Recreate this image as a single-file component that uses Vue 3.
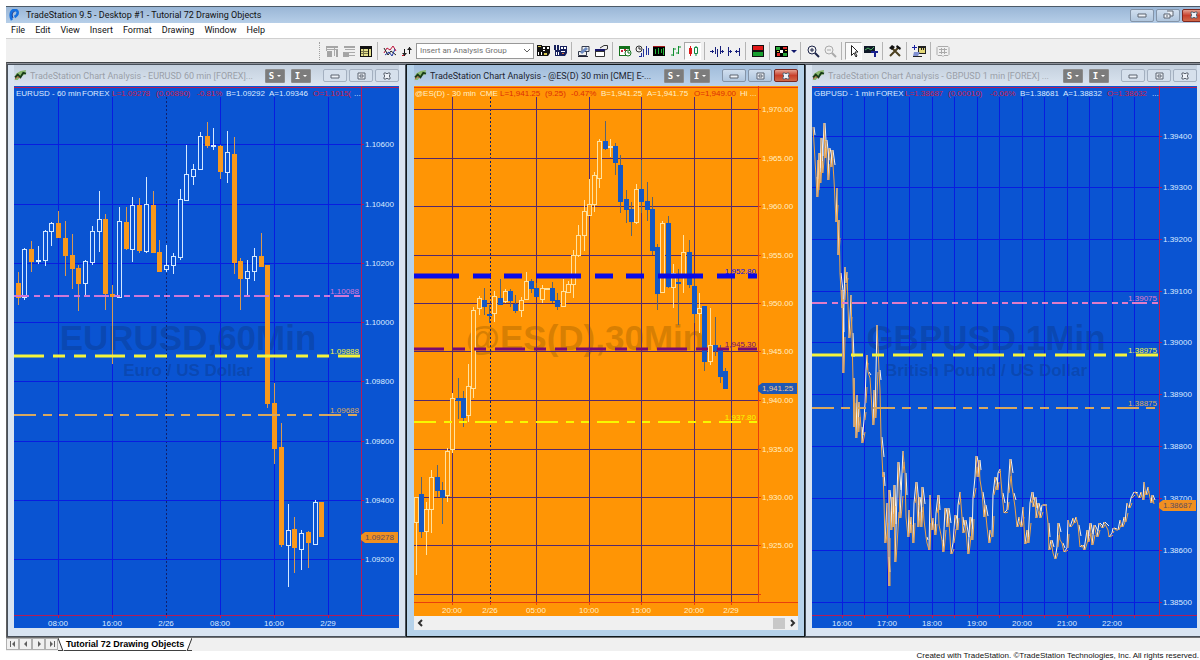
<template>
  <div class="app">
    <!-- Title bar -->
    <header class="app-title">
      <svg class="app-logo" viewBox="0 0 12 12">
        <path d="M4 11C2 8 2 1 6.500 1S10.500 6 6.500 8" fill="none" stroke="#1470e0" stroke-width="2.600" />
        <path d="M5 9C3.500 6 4.500 2.500 6.500 2.500" fill="none" stroke="#0a2f8c" stroke-width="1" />
      </svg>
      <h1>TradeStation 9.5 - Desktop #1 - Tutorial 72 Drawing Objects</h1>
      <div class="app-controls">
        <button v-for="c in appControls" :key="c.name" class="ctl" :class="c.cls" :aria-label="c.name">
          <svg viewBox="0 0 12 10"><path :d="c.d" /></svg>
        </button>
      </div>
    </header>

    <!-- Menu -->
    <nav class="menu">
      <a v-for="m in menu" :key="m" href="#">{{ m }}</a>
    </nav>

    <!-- Toolbar -->
    <div class="toolbar" role="toolbar">
      <span class="grip" />
      <template v-for="(t, i) in tools" :key="i">
        <span v-if="t === '|'" class="sep" />
        <div v-else-if="t === 'group'" class="group">
          <select aria-label="Analysis group">
            <option>Insert an Analysis Group</option>
          </select>
          <svg viewBox="0 0 8 8"><path d="M1 2l3 3 3-3" /></svg>
        </div>
        <button v-else class="tool" :class="{ pressed: t.on, slim: t.slim }" :aria-label="t.name">
          <svg :viewBox="t.slim ? '0 0 7 16' : '0 0 16 16'">
            <path v-for="(p, j) in t.p" :key="j" :d="p[1]" :fill="p[2] ? 'none' : p[0]" :stroke="p[2] ? p[0] : 'none'" :stroke-width="p[2]" />
          </svg>
        </button>
      </template>
    </div>

    <!-- Chart windows -->
    <main class="desk">
      <section v-for="c in charts" :key="c.id" class="win" :class="[c.id, { active: c.active }]">
        <div class="win-title">
          <svg class="win-icon" viewBox="0 0 14 12">
            <path d="M1 11l1-7 5-3 6-1-1 5-5 2-3 4z" fill="#8ab870" />
            <path d="M1 8l3-3 3 3 3-5 3 1" fill="none" stroke="#173c18" stroke-width="2" />
            <path d="M1 10l3-3 2 2" fill="none" stroke="#b0402c" stroke-width="1" />
          </svg>
          <h2>{{ c.title }}</h2>
          <button class="drop">S<i /></button>
          <button class="drop">I<i /></button>
          <div class="win-controls">
            <button v-for="w in winControls" :key="w.name" class="ctl" :class="w.cls" :aria-label="w.name">
              <svg viewBox="0 0 12 10"><path :d="w.d" /></svg>
            </button>
          </div>
        </div>

        <svg class="chart" :viewBox="c.box.join(' ')">
          <rect :x="c.box[0]" :y="c.box[1]" :width="c.box[2]" :height="c.box[3]" class="bg" />
          <g class="mark">
            <text :x="c.mark.x" y="350" class="mark-big">{{ c.mark.big }}</text>
            <text :x="c.mark.x" y="376" class="mark-small">{{ c.mark.small }}</text>
          </g>

          <!-- grid -->
          <path v-for="g in c.xs" :key="'x' + g[0]" :d="`M${g[0]} 97V${c.axisY}`" class="grid" :class="{ day: g[2] }" />
          <path v-for="g in c.ys" :key="'y' + g[0]" :d="`M${c.box[0]} ${g[0]}H${c.axisX}`" class="grid" />

          <!-- candles -->
          <g v-for="(k, i) in c.candles" :key="'c' + i" class="candle" :class="k[0] ? 'up' : 'down'">
            <path :d="wick(c, k, i)" />
            <rect :x="barX(c, i) - 2" :y="k[2]" width="4" :height="k[3] - k[2]" />
          </g>
          <g v-if="c.ticks" class="ticks">
            <path :d="c.ticks.rise" class="rise" />
            <path :d="c.ticks.fall" class="fall" />
          </g>

          <!-- horizontal drawing objects -->
          <g v-for="l in c.lines" :key="l.label">
            <path :d="`M${c.box[0]} ${l.y}H${c.axisX - 1}`" :stroke="l.color" :stroke-width="l.w" :stroke-dasharray="l.dash" />
            <text :x="c.axisX - 2" :y="l.y - 2" :fill="l.color" text-anchor="end">{{ l.label }}</text>
          </g>

          <!-- axes -->
          <path :d="`M${c.axisX} ${c.box[1]}V${c.axisY}M${c.box[0]} ${c.axisY}H${c.box[0] + c.box[2]}`" class="axis" />
          <path :d="`M${c.box[0]} 87H${c.box[0] + c.box[2]}`" class="axis" />
          <template v-for="g in c.ys" :key="'t' + g[0]">
            <path :d="`M${c.axisX} ${g[0]}h3`" class="axis" />
            <text :x="c.axisX + 4" :y="g[0] + 3" class="label">{{ g[1] }}</text>
          </template>
          <template v-for="g in c.xs" :key="'h' + g[0]">
            <path :d="`M${g[0]} ${c.axisY}v3`" class="axis" />
            <text :x="g[0]" :y="c.axisY + 11" text-anchor="middle" class="label">{{ g[1] }}</text>
          </template>

          <path :d="`M${c.axisX + 4} ${c.last.y - 5}H${c.box[0] + c.box[2] - 1}v11H${c.axisX + 4}l-4-3v-5z`" class="last-bg" />
          <text :x="c.axisX + 4" :y="c.last.y + 3" class="last">{{ c.last.label }}</text>

          <text v-for="s in c.info" :key="s[0]" :x="s[0]" y="96" :class="s[2] ? 'neg' : 'label'">{{ s[1] }}</text>
        </svg>

        <div v-if="c.active" class="scroll">
          <button aria-label="Scroll left"><svg viewBox="0 0 8 8"><path d="M5 1L2 4l3 3" /></svg></button>
          <span class="thumb" />
          <button aria-label="Scroll right"><svg viewBox="0 0 8 8"><path d="M3 1l3 3-3 3" /></svg></button>
        </div>
      </section>
    </main>

    <!-- Workspace tabs -->
    <div class="tabs">
      <button v-for="n in tabNav" :key="n.name" class="tab-nav" :aria-label="n.name">
        <svg viewBox="0 0 8 8"><path :d="n.d" /></svg>
      </button>
      <button class="tab">
        <svg class="slant" viewBox="0 0 6 13"><path d="M0 0H6V13H5z" class="fill" /><path d="M0 0L5 13" /></svg>
        <span>Tutorial 72 Drawing Objects</span>
        <svg class="slant" viewBox="0 0 6 13"><path d="M0 0H6L1 13H0z" class="fill" /><path d="M6 0L1 13" /></svg>
      </button>
    </div>

    <footer class="credit">Created with TradeStation. ©TradeStation Technologies, Inc. All rights reserved.</footer>
  </div>
</template>

<script setup>
const menu = ['File', 'Edit', 'View', 'Insert', 'Format', 'Drawing', 'Window', 'Help']

const MIN = 'M2 4h8v3H2z'
const MAX = 'M3 2h7v6H3zM5 4h3v2H5z'
const RESTORE = 'M5 1h6v5H8M2 4h6v4H2zM4 6h2'
const CLOSE = 'M3 2h2l1 1 1-1h2v2L8 5l1 1v2H7L6 7 5 8H3V6l1-1-1-1z'

const appControls = [
  { name: 'Minimize', d: MIN },
  { name: 'Restore', d: RESTORE },
  { name: 'Close', d: CLOSE, cls: 'close red' },
]
const winControls = [
  { name: 'Minimize', d: MIN },
  { name: 'Maximize', d: MAX },
  { name: 'Close', d: CLOSE, cls: 'close' },
]

const tabNav = [
  { name: 'First', d: 'M1 1h1v6H1zM6 1v6L3 4z' },
  { name: 'Previous', d: 'M5 1v6L2 4z' },
  { name: 'Next', d: 'M3 1v6l3-3z' },
  { name: 'Last', d: 'M2 1v6l3-3zM6 1h1v6H6z' },
]

// icon layers: [colour, path, stroke width]; no width means filled
const tools = [
  { name: 'Chart', p: [['#a5a5a5', 'M2 3h12v2H2zM3 8h5v6H3zM12 7h2v7h-2z'], ['#aaa', 'M2.500 5v3M10.500 5v8M3 6.500h11', 1]] },
  { name: 'Quotes', p: [['#a5a5a5', 'M3 3h11v2H3zM2 9h6v5H2z'], ['#aaa', 'M4 6.500h10M4 9.500h10M8 12.500h6', 1]] },
  { name: 'Matrix', p: [['#111', 'M2 3h12v11H2z'], ['#e4e08c', 'M3 6h7v7H3zM11 6h2v7h-2z'], ['#77754a', 'M3 8.500h7M3 10.500h7M5.500 6v7', 1]] },
  '|',
  { name: 'Indicator', p: [['#c0143c', 'M2 10l3-5 3 2 3-4 3 5', 1], ['#222', 'M2 5l4 7 3-4 5 4', 1], ['#2038a0', 'M3 12l4-3 3 4 3-7', 1]] },
  { name: 'Sort', p: [['#111', 'M5.500 6v7M10.500 4v7', 1], ['#222', 'M3 10h5l-2.500 3zM8 7h5l-2.500-3z'], ['#c01020', 'M3 12h2v1H3z']] },
  'group',
  { name: 'Apply group', p: [['#111', 'M2 2h5v5H2zM7 3h8v7l-2 3H7zM2 7h6v6H2z'], ['#fff', 'M8 4h2v2H8zM12 4h2v2h-2zM8 7h2v1H8zM3 9h1v3H3zM6 9h1v3H6z'], ['#d8c850', 'M9 10h3v2H9zM3 3h3v1H3z']] },
  { name: 'Save group', p: [['#16205c', 'M2 2h2v5H2zM5 2h2v5H5zM8 3h7v7l-2 3H8zM3 7h5v6H3z'], ['#fff', 'M9 4h2v2H9zM12 4h2v2h-2zM4 9h1v3H4zM6 9h1v3H6zM9 8h4v1H9z'], ['#d86a30', 'M10 10h2v1h-2z']] },
  '|',
  { name: 'Format analysis', p: [['#333a4c', 'M6 3.500h7v5H6zM2.500 8.500h8v4h-8z', 1], ['#6c8ac0', 'M4 9l6-5 2 2-6 5z'], ['#223', 'M2 13h10v1H2z']] },
  { name: 'Format window', p: [['#fff', 'M2 7h10v7H2z'], ['#16166c', 'M2 6h10v3H2z'], ['#333', 'M2.500 8.500h9v5h-9zM7 5l4-2.500h3.500V6l-3 1', 1]] },
  '|',
  { name: 'Session', p: [['#14701c', 'M2 3h11v10H2z'], ['#fff', 'M3 6h9v6H3z'], ['#c8203a', 'M4 7h2v2H4zM7 6h2v2H7z'], ['#fff', 'M14 10a3 3 0 1 1-6 0 3 3 0 0 1 6 0z'], ['#14701c', 'M14 10a3 3 0 1 1-6 0 3 3 0 0 1 6 0zM11 8v2h2', 1]] },
  { name: 'Interval', p: [['#333', 'M8 6a3 3 0 1 1-6 0 3 3 0 0 1 6 0zM5 4v2h2', 1], ['#20309c', 'M9.500 6v8M12.500 3v9M7.500 10v4M14.500 5v7M5 13.500h2', 1]] },
  { name: 'Data', p: [['#000', 'M2 3h12v10H2z'], ['#24b838', 'M4.500 6v5M7.500 5v6M10.500 6v4M12.500 5v7', 1], ['#a01818', 'M2 3h12v1H2z']] },
  { name: 'Bars', p: [['#109030', 'M5.500 5v8M3 12h2M6 6h2M10.500 3v8M8 10h2M11 4h2', 1]] },
  { name: 'Candles', on: true, p: [['#e01818', 'M4 5h3v6H4zM5 3h1v10H5z'], ['#108840', 'M9.500 4.500h3v6h-3zM11 3v1M11 11v2', 1]] },
  '|',
  { name: 'Narrow spacing', p: [['#18207c', 'M1 8.500h4M11 8.500h4M6.500 4v7M8.500 6v8M11.500 3v8M3.500 7v3M13.500 7v3', 1]] },
  { name: 'Wide spacing', p: [['#18207c', 'M2.500 4v9M2 8.500h4M9 8.500h5M13.500 5v8M4.500 7v3M10.500 7v3', 1]] },
  '|',
  { name: 'Subgraphs', p: [['#111', 'M2 2h12v12H2z'], ['#e01818', 'M3 3h10v4H3z'], ['#18a030', 'M3 9h10v4H3z']] },
  '|',
  { name: 'Drawing colors', p: [['#000', 'M1 3h13v11H1z'], ['#28a838', 'M2 4h4v3H2zM9 10h4v3H9z'], ['#e02828', 'M9 4h4v2H9zM3 10h3v3H3z'], ['#fff', 'M6 7h3v3H6z'], ['#e0d040', 'M3 8h2v1H3zM11 7h2v1h-2z']] },
  { name: 'More colors', slim: true, p: [['#10186c', 'M1 7h6l-3 3z']] },
  '|',
  { name: 'Zoom in', p: [['#1c2448', 'M11 7a4 4 0 1 1-8 0 4 4 0 0 1 8 0zM5 7h4M7 5v4', 1], ['#1c2448', 'M10 10l4 4', 2]] },
  { name: 'Zoom out', p: [['#aaa', 'M11 7a4 4 0 1 1-8 0 4 4 0 0 1 8 0zM5 7h4', 1], ['#aaa', 'M10 10l4 4', 2]] },
  '|',
  { name: 'Pointer', on: true, p: [['#fff', 'M5 2v11l3-3 2 4 1-1-2-4h3z'], ['#222', 'M5.500 2.500v10l2.500-2.500 2 4 1-1-2-4h3z', 1]] },
  { name: 'Data tip', p: [['#101828', 'M1 3h11v7H1z'], ['#48b060', 'M2 7l3-2 3 2 3-3', 1], ['#18208c', 'M8 8h7v2h-2v4h-2v-4H8z']] },
  '|',
  { name: 'Tools', p: [['#4c4020', 'M3 13L12 4M4 4l9 9', 2], ['#111', 'M2 5l3-3 3 2-3 3zM10 2l4 3-1 2-4-3z']] },
  '|',
  { name: 'New window', p: [['#222', 'M7 3h8v8H7z'], ['#e4d878', 'M8 5h6v5H8z'], ['#1820a0', 'M1 4h5v1H1zM3 2h1v5H3z'], ['#8090d0', 'M3 9h6l-2 4H2z'], ['#222', 'M2 13h9v1H2zM10 5h1v2h-1zM12 5h1v2h-1z']] },
  '|',
  { name: 'Print grid', p: [['#aaa', 'M3 3.500h10l1 1v7l-1 1H9l-1 1-1-1H3l-1-1v-7zM4 6.500h8M4 9.500h8M6.500 5v6M9.500 5v6', 1]] },
]

// candle rows: [rising, high, top, bottom, low]
const eurCandles = [
  [0, 272, 283, 297, 305], [1, 248, 249, 297, 300], [0, 241, 249, 261, 272], [1, 246, 260, 261, 264],
  [1, 230, 231, 260, 266], [1, 222, 223, 231, 246], [0, 211, 223, 237, 237], [0, 221, 238, 255, 276],
  [0, 234, 255, 268, 289], [0, 265, 268, 283, 311], [1, 260, 261, 283, 296], [1, 226, 231, 262, 265],
  [1, 191, 219, 231, 252], [0, 214, 219, 293, 310], [0, 285, 294, 296, 364], [1, 207, 221, 297, 297],
  [0, 207, 222, 248, 250], [1, 197, 205, 249, 262], [0, 198, 205, 250, 253], [1, 177, 204, 251, 253],
  [0, 191, 205, 252, 252], [0, 240, 252, 271, 271], [1, 245, 265, 269, 272], [1, 253, 256, 265, 274],
  [1, 189, 199, 257, 260], [1, 145, 174, 200, 200], [1, 164, 169, 176, 185], [1, 132, 136, 169, 170],
  [0, 122, 136, 145, 148], [1, 128, 145, 146, 150], [0, 145, 146, 171, 179], [1, 131, 152, 172, 183],
  [0, 137, 154, 262, 274], [0, 258, 261, 278, 310], [1, 260, 271, 278, 296], [1, 248, 256, 271, 281],
  [0, 233, 256, 266, 267], [0, 265, 265, 403, 408], [0, 383, 403, 448, 464], [0, 423, 447, 544, 547],
  [1, 504, 530, 545, 587], [0, 517, 529, 547, 573], [1, 530, 533, 549, 570], [0, 531, 532, 542, 568],
  [1, 500, 502, 544, 544], [0, 502, 502, 536, 536],
]

const esCandles = [
  [1, 497, 497, 522, 575], [0, 477, 494, 531, 538], [1, 502, 509, 531, 555], [1, 470, 477, 509, 533],
  [0, 465, 477, 490, 497], [0, 482, 490, 497, 524], [1, 448, 451, 495, 502], [1, 393, 398, 449, 453],
  [0, 378, 398, 400, 419], [0, 391, 398, 417, 427], [1, 364, 386, 415, 422], [1, 307, 310, 388, 398],
  [1, 296, 298, 308, 315], [0, 288, 300, 306, 315], [0, 305, 314, 315, 323], [1, 291, 296, 313, 322],
  [0, 279, 298, 304, 304], [1, 289, 291, 301, 303], [0, 289, 291, 300, 307], [0, 295, 304, 310, 313],
  [1, 297, 300, 310, 317], [1, 272, 281, 299, 299], [0, 279, 281, 288, 293], [0, 283, 288, 296, 297],
  [1, 285, 288, 299, 303], [1, 288, 288, 289, 289], [0, 282, 288, 300, 303], [0, 293, 300, 306, 310],
  [1, 279, 291, 306, 307], [1, 281, 284, 292, 293], [1, 250, 255, 284, 298], [1, 225, 235, 255, 257],
  [1, 200, 211, 235, 251], [1, 179, 204, 215, 216], [1, 172, 175, 204, 212], [1, 139, 141, 178, 188],
  [0, 121, 141, 148, 150], [1, 139, 146, 147, 157], [0, 143, 146, 162, 175], [0, 155, 165, 201, 213],
  [0, 190, 199, 209, 223], [0, 202, 209, 221, 236], [1, 184, 189, 222, 224], [0, 160, 189, 201, 213],
  [0, 182, 201, 209, 221], [0, 197, 209, 250, 255], [0, 244, 247, 293, 310], [1, 221, 223, 292, 293],
  [0, 216, 223, 286, 288], [1, 264, 273, 287, 308], [0, 269, 282, 283, 325], [1, 235, 252, 277, 293],
  [0, 240, 252, 284, 288], [0, 278, 286, 313, 323], [1, 293, 308, 313, 333], [0, 306, 306, 361, 371],
  [1, 308, 345, 361, 365], [0, 317, 345, 350, 356], [0, 345, 350, 376, 383], [0, 368, 371, 388, 388],
]

// one-minute swings, x y pairs
const gbpSwings = `
  813,127 814,143 816,177 817,197 818,160 818,190 819,153 820,183 821,138 822,173 824,123 825,158 826,140 828,180
  829,148 831,167 832,150 834,180 836,222 837,188 838,255 839,220 840,273 842,308 842,290 843,373 844,300 845,267
  846,283 847,272 849,338 851,295 852,333 853,380 854,427 854,378 856,438 857,395 858,432 859,402 861,427 862,443
  864,420 865,403 866,370 867,355 868,372 870,378 873,425 874,390 875,418 877,325 879,370 880,390 881,437 883,477
  883,472 884,500 885,543 887,503 888,557 889,586 889,490 891,530 892,497 893,527 894,485 895,562 898,462 900,518
  902,473 903,451 905,473 906,517 908,537 909,510 910,533 911,517 913,543 914,503 916,482 918,527 919,497 921,527
  922,487 924,520 926,537 927,543 929,550 930,495 932,530 933,518 935,535 936,513 938,495 939,525 942,540 943,552
  945,508 947,527 948,508 950,537 951,554 953,543 955,515 957,530 958,505 960,492 962,517 963,533 965,520 968,554
  970,517 972,540 973,498 975,477 976,456 978,477 979,460 980,480 982,492 984,517 985,505 987,527 989,543 990,530
  992,537 993,495 995,477 997,490 998,473 1000,469 1002,493 1004,513 1007,510 1008,493 1010,459 1012,487 1013,493
  1015,507 1017,527 1019,517 1021,527 1023,507 1025,544 1027,530 1028,543 1030,503 1032,492 1033,507 1035,497
  1036,518 1038,503 1040,518 1042,505 1046,505 1048,523 1049,550 1051,540 1053,553 1055,559 1057,547 1058,523
  1060,540 1062,543 1064,552 1067,548 1068,520 1070,527 1073,518 1074,523 1076,517 1078,525 1080,547 1082,545
  1084,550 1087,530 1088,542 1090,523 1092,545 1094,525 1097,537 1099,523 1102,528 1104,522 1108,530 1109,537
  1112,533 1113,528 1116,530 1118,530 1120,520 1122,527 1124,517 1125,522 1127,503 1129,508 1131,498 1134,492
  1137,494 1139,498 1141,492 1143,500 1144,482 1146,495 1148,487 1150,498 1151,503 1152,495 1154,504`

// splits the swings into rising and falling strokes, each with a short echo of the other kind
const buildTicks = (src) => {
  const pts = src.trim().split(/\s+/).map((p) => p.split(',').map(Number))
  let rise = ''
  let fall = ''
  for (let i = 1; i < pts.length; i++) {
    const [x1, y1] = pts[i - 1]
    const [x2, y2] = pts[i]
    const seg = `M${x1} ${y1}L${x2} ${y2}`
    const echo = `M${x1 + 1} ${y1}L${x2 + 1} ${Math.round((y1 + y2) / 2)}`
    if (y2 < y1) {
      rise += seg
      fall += echo
    } else {
      fall += seg
      if (i % 2) rise += echo
    }
  }
  return { rise, fall }
}

const charts = [
  {
    id: 'eur',
    title: 'TradeStation Chart Analysis - EURUSD 60 min [FOREX]...',
    box: [14, 86, 385, 542],
    axisX: 361,
    axisY: 615,
    mark: { x: 188, big: 'EURUSD,60Min', small: 'Euro / US Dollar' },
    xs: [[58, '08:00'], [112, '16:00'], [166, '2/26', true], [220, '08:00'], [274, '16:00'], [328, '2/29']],
    ys: [[144, '1.10600'], [204, '1.10400'], [263, '1.10200'], [322, '1.10000'], [381, '1.09800'], [441, '1.09600'], [500, '1.09400'], [559, '1.09200']],
    candles: eurCandles, x0: 17.7, step: 6.75,
    lines: [
      { y: 296, label: '1.10088', color: '#cf78d8', w: 2, dash: '15 5 6 4 6 4' },
      { y: 356, label: '1.09888', color: '#f4f43c', w: 3, dash: '30 9 12 9 12 9' },
      { y: 415, label: '1.09688', color: '#d8a860', w: 2, dash: '22 7 9 7 9 7' },
    ],
    last: { y: 537, label: '1.09278' },
    info: [[16, 'EURUSD - 60 min'], [82, 'FOREX'], [112, 'L=1.09278', 1], [156, '(0.00890)', 1], [197, '-0.81%', 1], [226, 'B=1.09292'], [269, 'A=1.09346'], [313, 'O=1.1015(', 1], [354, '...']],
  },
  {
    id: 'es',
    active: true,
    title: 'TradeStation Chart Analysis - @ES(D) 30 min [CME] E-...',
    box: [414, 86, 384, 530],
    axisX: 758,
    axisY: 602,
    mark: { x: 585, big: '@ES(D),30Min', small: '' },
    xs: [[452, '20:00'], [490, '2/26', true], [536, '05:00'], [589, '10:00'], [641, '15:00'], [694, '20:00'], [731, '2/29']],
    ys: [[109, '1,970.00'], [158, '1,965.00'], [206, '1,960.00'], [255, '1,955.00'], [303, '1,950.00'], [351, '1,945.00'], [400, '1,940.00'], [449, '1,935.00'], [497, '1,930.00'], [545, '1,925.00'], [594, '']],
    candles: esCandles, x0: 415.7, step: 5.25,
    lines: [
      { y: 276, label: '1,952.80', color: '#0a0ae6', w: 5, dash: '45 14 18 13 18 14' },
      { y: 349, label: '1,945.30', color: '#7a0a70', w: 3, dash: '30 9 12 9 12 9' },
      { y: 422, label: '1,937.80', color: '#f8f800', w: 2, dash: '22 8 8 7 8 8' },
    ],
    last: { y: 388, label: '1,941.25' },
    info: [[415, '@ES(D) - 30 min'], [480, 'CME'], [500, 'L=1,941.25', 1], [545, '(9.25)', 1], [571, '-0.47%', 1], [601, 'B=1,941.25'], [647, 'A=1,941.75'], [694, 'O=1,949.00', 1], [740, 'Hi ...']],
  },
  {
    id: 'gbp',
    title: 'TradeStation Chart Analysis - GBPUSD 1 min [FOREX] ...',
    box: [812, 86, 385, 542],
    axisX: 1159,
    axisY: 615,
    mark: { x: 986, big: 'GBPUSD,1Min', small: 'British Pound / US Dollar' },
    xs: [[842, '16:00'], [864, ''], [887, '17:00'], [909, ''], [932, '18:00'], [954, ''], [977, '19:00'], [999, ''], [1022, '20:00'], [1044, ''], [1067, '21:00'], [1089, ''], [1112, '22:00'], [1134, '']],
    ys: [[136, '1.39400'], [187, '1.39300'], [239, '1.39200'], [291, '1.39100'], [342, '1.39000'], [394, '1.38900'], [446, '1.38800'], [498, '1.38700'], [550, '1.38600'], [602, '1.38500']],
    ticks: buildTicks(gbpSwings),
    lines: [
      { y: 303, label: '1.39075', color: '#e07cc8', w: 2, dash: '15 5 6 4 6 4' },
      { y: 355, label: '1.38975', color: '#f4f43c', w: 3, dash: '30 9 12 9 12 9' },
      { y: 408, label: '1.38875', color: '#d8a860', w: 2, dash: '22 7 9 7 9 7' },
    ],
    last: { y: 505, label: '1.38687' },
    info: [[814, 'GBPUSD - 1 min'], [876, 'FOREX'], [905, 'L=1.38687', 1], [948, '(0.00010)', 1], [990, '-0.06%', 1], [1020, 'B=1.38681'], [1063, 'A=1.38832'], [1107, 'O=1.38632', 1], [1152, '...']],
  },
]

const barX = (c, i) => Math.round(c.x0 + i * c.step)

const wick = (c, k, i) => {
  const x = barX(c, i)
  return `M${x} ${k[1]}V${k[2]}M${x} ${k[3]}V${k[4]}`
}
</script>

<style>
body {
  margin: 0;
  background: #fff;
}
</style>

<style scoped>
.app {
  padding: 6px 0 0 6px;
  font-family: Roboto, 'Open Sans', sans-serif;
  font-size: 9px;
  color: #111;
}

button {
  font: inherit;
  padding: 0;
  margin: 0;
}

/* ── TITLE BAR ── */
.app-title {
  display: flex;
  align-items: center;
  height: 17px;
  padding-left: 2px;
  border-top: 1px solid #4c5a68;
  box-sizing: border-box;
  overflow: hidden;
  background: linear-gradient(#9ab6d6, #b6cee8);
}
.app-logo {
  width: 12px;
  height: 12px;
  margin-right: 6px;
}
h1 {
  flex: 1;
  margin: 0;
  font-size: 9px;
  font-weight: 400;
  line-height: 14px;
}
.app-controls,
.win-controls {
  display: flex;
  gap: 2px;
}
.app-controls { margin-right: -6px; }
.ctl {
  width: 24px;
  height: 13px;
  display: flex;
  align-items: center;
  justify-content: center;
  border: 1px solid #8494a8;
  border-radius: 2px;
  background: linear-gradient(#d0deee, #b0c6de);
}
.ctl svg {
  width: 12px;
  height: 10px;
}
.ctl path {
  fill: #eef2f8;
  stroke: #5c6470;
  stroke-width: 1;
}
.ctl.red,
.active .ctl.close {
  border-color: #7c2820;
  background: linear-gradient(#e4a090, #c8402c 50%, #d06848);
}

/* ── MENU ── */
.menu {
  display: flex;
  gap: 10px;
  height: 16px;
  padding-left: 5px;
  border-bottom: 1px solid #d0d0d0;
  box-sizing: border-box;
}
.menu a {
  color: #111;
  text-decoration: none;
  line-height: 15px;
}

/* ── TOOLBAR ── */
.toolbar {
  display: flex;
  align-items: center;
  height: 23px;
  padding-left: 313px;
  background: #f0f0f0;
}
.grip {
  width: 2px;
  height: 18px;
  margin-right: 2px;
  border-left: 1px dotted #a0a0a0;
  box-sizing: border-box;
}
.tool {
  width: 17px;
  height: 18px;
  border: 1px solid transparent;
  background: none;
  display: flex;
  align-items: center;
  justify-content: center;
}
.tool svg {
  width: 16px;
  height: 16px;
  flex-shrink: 0;
}
.tool.slim,
.tool.slim svg { width: 7px; }
.tool.pressed {
  background: #fafafa;
  border-color: #a8a8a8 #fff #fff #a8a8a8;
}
.sep {
  width: 1px;
  height: 18px;
  margin: 0 3px;
  background: #b4b4b4;
}
.group {
  position: relative;
  width: 118px;
  height: 16px;
  margin-left: 1px;
}
.group select {
  display: block;
  width: 100%;
  height: 16px;
  padding: 0 12px 0 3px;
  border: 1px solid #989898;
  border-radius: 0;
  box-sizing: border-box;
  appearance: none;
  background: #fff;
  color: #707070;
  font-family: inherit;
  font-size: 8px;
}
.group svg {
  position: absolute;
  top: 4px;
  right: 3px;
  width: 8px;
  height: 8px;
  pointer-events: none;
}
.group path {
  fill: none;
  stroke: #606060;
}

/* ── CHART WINDOWS ── */
.desk {
  display: grid;
  grid-template-columns: 399fr 399fr 395fr;
  padding: 1px 0 0;
  border-top: 1px solid #404448;
  border-left: 1px solid #606060;
  background: #8c9098;
}
.win {
  padding: 0 6px 6px;
  border: 1px solid #48505a;
  background: #d9e4f1;
  box-sizing: border-box;
}
.win.gbp {
  padding-right: 3px;
  border-right: 0;
}
.win.active {
  padding-left: 7px;
  border-color: #10181c;
  background: #b6d2ea;
}
.win-title {
  display: flex;
  align-items: center;
  height: 21px;
  background: linear-gradient(#c4d0de, #dbe5f0);
}
.active .win-title { background: linear-gradient(#a0bcda, #bcd2ea); }
.win-icon {
  width: 13px;
  height: 11px;
  margin-right: 3px;
}
h2 {
  flex: 1;
  min-width: 0;
  margin: 0;
  overflow: hidden;
  white-space: nowrap;
  font-size: 9px;
  font-weight: 400;
  color: #9a9fa8;
}
.active h2 { color: #1c2430; }
.drop {
  width: 20px;
  height: 14px;
  margin-right: 6px;
  display: flex;
  align-items: center;
  justify-content: center;
  gap: 3px;
  border: 1px solid #8c8c8c;
  border-radius: 1px;
  background: #7c7c7c;
  color: #fff;
  font-family: 'DejaVu Sans Mono', monospace;
  font-weight: 700;
  font-size: 9px;
  line-height: 12px;
}
.drop i {
  border: 2px solid transparent;
  border-top-color: #fff;
  border-bottom: 0;
}
.win-controls { margin-left: 6px; }
.win:not(.active) .ctl {
  background: #d6e0ec;
  border-color: #a4b0c0;
}

/* ── CHART ── */
.chart {
  display: block;
  width: 100%;
  height: auto;
  font-family: 'Liberation Sans', Arial, sans-serif;
  font-size: 8px;
}
.bg { fill: #0a54d2; }
.es .bg { fill: #ff9505; }
.mark {
  fill: #0b3a8c;
  fill-opacity: 0.45;
  font-weight: 700;
  text-anchor: middle;
}
.es .mark { fill: #a86400; }
.mark-big { font-size: 35px; }
.mark-small { font-size: 17px; }
.grid {
  stroke: #081ce0;
  stroke-width: 1;
  shape-rendering: crispEdges;
}
.es .grid { stroke: #54286c; }
.day,
.es .day {
  stroke: #10206c;
  stroke-dasharray: 2 2;
}
.axis {
  fill: none;
  stroke: #b41c58;
  stroke-width: 1;
  shape-rendering: crispEdges;
}
.es .axis { stroke: #e8400c; }
.candle { shape-rendering: crispEdges; }
.up path { stroke: #d4e8ff; }
.up rect {
  fill: #0a54d2;
  stroke: #d4e8ff;
}
.down path { stroke: #d89850; }
.down rect {
  fill: #f8981c;
  stroke: #f8981c;
}
.es .up path { stroke: #ffe2a0; }
.es .up rect {
  fill: #ff9505;
  stroke: #ffe2a0;
}
.es .down path { stroke: #5a6470; }
.es .down rect {
  fill: #1458c4;
  stroke: #1458c4;
}
.ticks path {
  fill: none;
  stroke-width: 1;
}
.ticks .fall { stroke: #f0a444; }
.ticks .rise { stroke: #fff4e4; }
.label { fill: #dceaff; }
.es .label { fill: #fff0c8; }
.neg { fill: #cc1c48; }
.es .neg { fill: #dc2c08; }
.last-bg { fill: #f09020; }
.last { fill: #5c4c60; }
.es .last-bg { fill: #2058b4; }
.es .last { fill: #f0c890; }

/* ── SCROLLBAR ── */
.scroll {
  display: flex;
  align-items: center;
  height: 14px;
  background: #f0f0f0;
}
.scroll button {
  width: 13px;
  height: 14px;
  border: 0;
  background: none;
}
.scroll svg {
  display: block;
  width: 8px;
  height: 8px;
  margin: 0 auto;
}
.scroll path {
  fill: none;
  stroke: #303030;
  stroke-width: 2;
}
.thumb {
  width: 12px;
  height: 11px;
  margin-left: auto;
  background: #c8c8c8;
}

/* ── TABS ── */
.tabs {
  display: flex;
  height: 14px;
  border-top: 1px solid #707070;
  box-sizing: border-box;
  background: #f0f0f0;
}
.tab-nav {
  width: 13px;
  height: 12px;
  border: 1px solid #b0b0b0;
  background: #f0f0f0;
  box-sizing: border-box;
  display: flex;
  align-items: center;
  justify-content: center;
}
.tab-nav svg {
  width: 8px;
  height: 8px;
}
.tab-nav path { fill: #606060; }
.tab {
  display: flex;
  height: 13px;
  border: 0;
  border-bottom: 1px solid #404040;
  box-sizing: border-box;
  background: none;
}
.tab span {
  padding: 0 2px;
  background: #fff;
  font-family: 'Liberation Sans', Arial, sans-serif;
  font-size: 9px;
  font-weight: 700;
  line-height: 12px;
}
.slant {
  width: 6px;
  height: 13px;
}
.slant path {
  fill: none;
  stroke: #303030;
}
.slant .fill {
  fill: #fff;
  stroke: none;
}

/* ── FOOTER ── */
.credit {
  padding-right: 1px;
  text-align: right;
  font-family: 'Liberation Sans', Arial, sans-serif;
  font-size: 8px;
  line-height: 10px;
}
</style>
